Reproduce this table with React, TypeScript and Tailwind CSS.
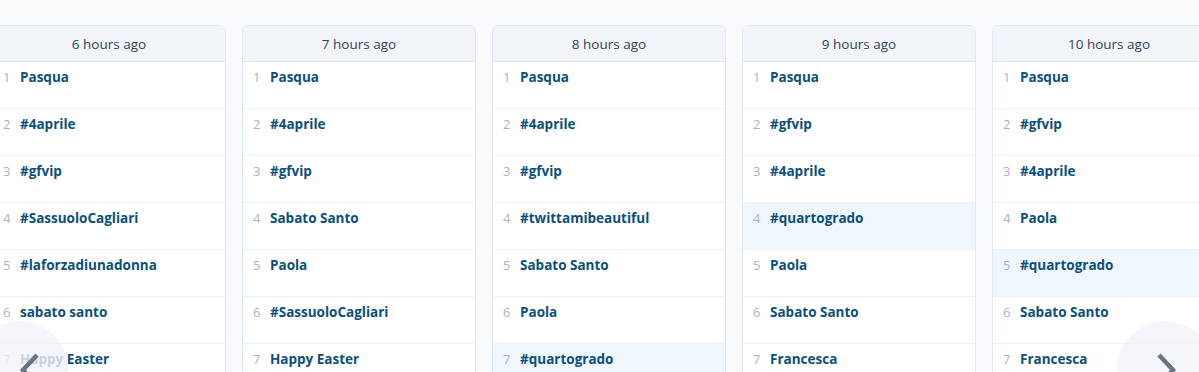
import React from 'react';

type Column = { label: string; items: string[]; highlight?: number };

const columns: Column[] = [
  { label: '6 hours ago', items: ['Pasqua', '#4aprile', '#gfvip', '#SassuoloCagliari', '#laforzadiunadonna', 'sabato santo', 'Happy Easter'] },
  { label: '7 hours ago', items: ['Pasqua', '#4aprile', '#gfvip', 'Sabato Santo', 'Paola', '#SassuoloCagliari', 'Happy Easter'] },
  { label: '8 hours ago', items: ['Pasqua', '#4aprile', '#gfvip', '#twittamibeautiful', 'Sabato Santo', 'Paola', '#quartogrado'], highlight: 6 },
  { label: '9 hours ago', items: ['Pasqua', '#gfvip', '#4aprile', '#quartogrado', 'Paola', 'Sabato Santo', 'Francesca'], highlight: 3 },
  { label: '10 hours ago', items: ['Pasqua', '#gfvip', '#4aprile', 'Paola', '#quartogrado', 'Sabato Santo', 'Francesca'], highlight: 4 },
];

const Chevron = ({ dir }: { dir: 'left' | 'right' }) => (
  <svg width="22" height="36" viewBox="0 0 22 36" fill="none">
    <path
      d={dir === 'left' ? 'M18 3 L4 18 L18 33' : 'M4 3 L18 18 L4 33'}
      stroke="#6b7280"
      strokeWidth="4.5"
      strokeLinecap="butt"
      strokeLinejoin="miter"
    />
  </svg>
);

export default function App() {
  return (
    <div className="relative h-[372px] w-[1199px] overflow-hidden bg-[#f8fafc] font-['Open_Sans','Noto_Sans',sans-serif]">
      <div className="flex gap-4 pt-[25px] -ml-2">
        {columns.map((col) => (
          <div key={col.label} className="w-[234px] shrink-0 rounded-md border border-[#e2e8f0] bg-white overflow-hidden">
            <div className="h-[36px] flex items-center justify-center pt-[1px] bg-[#f1f5f9] border-b border-[#e2e8f0] text-[13.5px] text-[#334155]">
              {col.label}
            </div>
            {col.items.map((item, i) => (
              <div
                key={i}
                className={`h-[47px] flex items-start gap-[10px] pl-[10px] pt-[5px] border-b border-[#eef2f6] ${col.highlight === i ? 'bg-[#eff7fd]' : ''}`}
              >
                <span className="text-[13px] leading-[20px] text-[#a9b3bf] w-[7px]">{i + 1}</span>
                <span className="text-[13.5px] leading-[20px] font-bold text-[#0b4f7c]">{item}</span>
              </div>
            ))}
          </div>
        ))}
      </div>

      <button className="absolute left-[-28px] top-[321px] w-[96px] h-[96px] rounded-full bg-[#f1f4f8]/80 flex items-start justify-center pt-[31px] pl-[20px]">
        <Chevron dir="left" />
      </button>
      <button className="absolute left-[1117px] top-[321px] w-[96px] h-[96px] rounded-full bg-[#f1f4f8]/80 flex items-start justify-center pt-[31px] pl-[2px]">
        <Chevron dir="right" />
      </button>
    </div>
  );
}
